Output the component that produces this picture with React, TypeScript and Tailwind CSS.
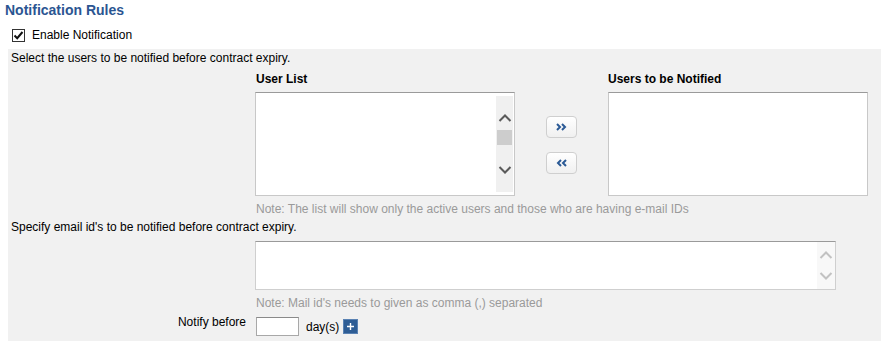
import React from "react";

const Chevron = ({ dir, color }: { dir: "up" | "down"; color: string }) => (
	<svg width="14" height="8" viewBox="0 0 14 8" className="block">
		<path
			d={dir === "up" ? "M1.5 7 L7 1.5 L12.5 7" : "M1.5 1 L7 6.5 L12.5 1"}
			fill="none"
			stroke={color}
			strokeWidth="2"
		/>
	</svg>
);

const MoveButton = ({ dir }: { dir: "right" | "left" }) => (
	<button className="w-[31px] h-[22px] rounded-[4px] border border-[#cfcfcf] bg-gradient-to-b from-[#ffffff] to-[#f0f0f0] flex items-center justify-center">
		<svg width="11" height="8" viewBox="0 0 11 8">
			<path
				d={
					dir === "right"
						? "M1 1 L4 4 L1 7 M6 1 L9 4 L6 7"
						: "M10 1 L7 4 L10 7 M5 1 L2 4 L5 7"
				}
				fill="none"
				stroke="#2b5a96"
				strokeWidth="2"
			/>
		</svg>
	</button>
);

const App: React.FC = () => {
	return (
		<div className="w-[881px] h-[341px] bg-white flex flex-col font-['Liberation_Sans',Arial,sans-serif] text-[12px] leading-[14px] text-black overflow-hidden">
			<div className="pt-[2px] pl-[5px] text-[14px] leading-[16px] font-bold text-[#2b5592]">
				Notification Rules
			</div>

			<div className="mt-[10px] pl-[12px] flex items-center h-[14px]">
				<span className="w-[13px] h-[13px] border border-[#333] bg-white flex items-center justify-center">
					<svg width="11" height="11" viewBox="0 0 11 11">
						<path d="M1.5 5.5 L4.2 8.2 L9.5 2" fill="none" stroke="#111" strokeWidth="2" />
					</svg>
				</span>
				<span className="ml-[7px]">Enable Notification</span>
			</div>

			<div className="mt-[7px] ml-[8px] flex-1 bg-[#f1f1f1] pt-[2px]">
				<div className="pl-[3px]">Select the users to be notified before contract expiry.</div>

				<div className="mt-[7px] pl-[247px] flex">
					<div className="w-[260px]">
						<div className="font-bold pl-[1px]">User List</div>
						<div className="mt-[6px] h-[104px] bg-white border border-[#c8c8c8] border-t-[#9a9a9a] flex">
							<div className="flex-1" />
							<div className="w-[17px] my-[3px] mr-[1px] bg-[#f0f0f0] flex flex-col items-center">
								<div className="pt-[18px]">
									<Chevron dir="up" color="#5a5a5a" />
								</div>
								<div className="mt-[8px] w-[15px] h-[15px] bg-[#cdcdcd]" />
								<div className="flex-1" />
								<div className="pb-[18px]">
									<Chevron dir="down" color="#5a5a5a" />
								</div>
							</div>
						</div>
					</div>

					<div className="w-[93px] pt-[44px] flex flex-col items-center gap-[14px]">
						<MoveButton dir="right" />
						<MoveButton dir="left" />
					</div>

					<div className="w-[260px]">
						<div className="font-bold">Users to be Notified</div>
						<div className="mt-[6px] h-[104px] bg-white border border-[#c8c8c8] border-t-[#9a9a9a]" />
					</div>
				</div>

				<div className="mt-[6px] pl-[248px] text-[#9a9a9a]">
					Note: The list will show only the active users and those who are having e-mail IDs
				</div>

				<div className="mt-[4px] pl-[3px]">Specify email id's to be notified before contract expiry.</div>

				<div className="mt-[7px] ml-[247px] w-[581px] h-[49px] bg-white border border-[#cfcfcf] border-t-[#9a9a9a] flex">
					<div className="flex-1" />
					<div className="w-[18px] bg-[#f8f8f8] flex flex-col items-center pt-[9px]">
						<Chevron dir="up" color="#c2c2c2" />
						<div className="mt-[13px]">
							<Chevron dir="down" color="#c2c2c2" />
						</div>
					</div>
				</div>

				<div className="mt-[6px] pl-[248px] text-[#9a9a9a]">
					Note: Mail id's needs to given as comma (,) separated
				</div>

				<div className="mt-[5px] flex">
					<div className="w-[238px] text-right">Notify before</div>
					<div className="ml-[10px] flex items-center">
						<div className="mt-[2px] w-[43px] h-[19px] bg-white border border-[#a8a8a8] border-t-[#8a8a8a]" />
						<span className="ml-[7px] mt-[2px]">day(s)</span>
						<button className="ml-[4px] mt-[2px] w-[15px] h-[15px] bg-[#2e5d95] border border-[#5a82b3] flex items-center justify-center">
							<svg width="9" height="9" viewBox="0 0 9 9">
								<path d="M4.5 1 V8 M1 4.5 H8" stroke="#ffffff" strokeWidth="1.4" />
							</svg>
						</button>
					</div>
				</div>
			</div>
		</div>
	);
};

export default App;
